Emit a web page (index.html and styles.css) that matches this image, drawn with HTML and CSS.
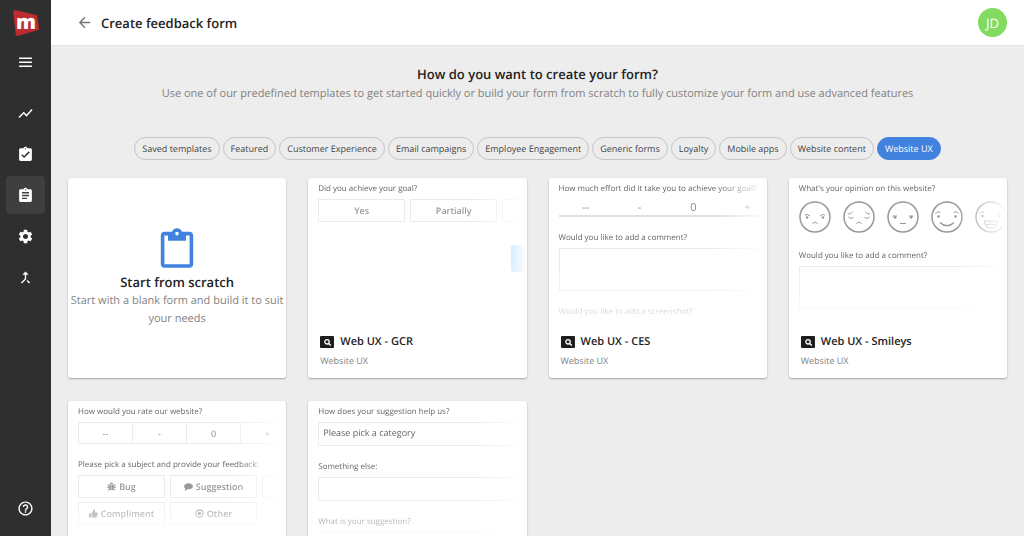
FILE: index.html
```html
<!DOCTYPE html>
<html lang="en">
<head>
  <meta charset="utf-8" />
  <title>Create feedback form</title>
  <meta name="viewport" content="width=device-width, initial-scale=1" />
  <link rel="stylesheet" href="styles.css">
</head>
<body>
  <!-- Shared icons -->
  <svg class="sprite" aria-hidden="true">
    <symbol id="i-template" viewBox="0 0 14 12">
      <rect width="14" height="12" rx="1" fill="#1d1d1d"/>
      <circle cx="7" cy="5.8" r="2.2" fill="none" stroke="#fff" stroke-width="1.3"/>
      <path d="M8.6 7.4l2.2 2.2" stroke="#fff" stroke-width="1.4"/>
    </symbol>
  </svg>

  <!-- Sidebar -->
  <aside class="sidebar">
    <a class="logo" href="#" aria-label="Home">
      <svg viewBox="0 0 26 26"><path d="M2 0L23 5q1 0 1.200 1.200L26 18.500q.2 1.200-1 1.600L4.500 25.900Q3 26 2.700 24.500L.3 1.700Q.3 0 2 0z" fill="#bd2d2f"/><text x="13" y="19" text-anchor="middle">m</text></svg>
    </a>
    <button class="side-item menu" aria-label="Menu">
      <svg viewBox="0 0 24 24"><path d="M3 5h18v2H3zM3 10.700h18v2H3zM3 16.400h18v2H3z"/></svg>
    </button>
    <nav>
      <a class="side-item" href="#" aria-label="Analytics"><svg viewBox="0 0 24 24"><path d="M3.500 18.490l6-6.010 4 4L22 6.920l-1.410-1.410-7.090 7.970-4-4L2 16.990z"/></svg></a>
      <a class="side-item" href="#" aria-label="Tasks"><svg viewBox="0 0 24 24"><path d="M19 3h-4.180C14.400 1.840 13.300 1 12 1s-2.400.84-2.820 2H5c-1.100 0-2 .9-2 2v14c0 1.100.9 2 2 2h14c1.100 0 2-.9 2-2V5c0-1.100-.9-2-2-2zm-7 0c.55 0 1 .45 1 1s-.45 1-1 1-1-.45-1-1 .45-1 1-1zm-2 14l-4-4 1.410-1.410L10 14.170l6.590-6.590L18 9l-8 8z"/></svg></a>
      <a class="side-item active" href="#" aria-label="Forms"><svg viewBox="0 0 24 24"><path d="M19 3h-4.180C14.400 1.840 13.300 1 12 1s-2.400.84-2.820 2H5c-1.100 0-2 .9-2 2v14c0 1.100.9 2 2 2h14c1.100 0 2-.9 2-2V5c0-1.100-.9-2-2-2zm-7 0c.55 0 1 .45 1 1s-.45 1-1 1-1-.45-1-1 .45-1 1-1zm2 14H7v-2h7v2zm3-4H7v-2h10v2zm0-4H7V7h10v2z"/></svg></a>
      <a class="side-item" href="#" aria-label="Settings"><svg viewBox="0 0 24 24"><path d="M19.140 12.940c.04-.3.06-.61.06-.94 0-.32-.02-.64-.07-.94l2.030-1.580c.18-.14.23-.41.12-.61l-1.920-3.320c-.12-.22-.37-.29-.59-.22l-2.390.96c-.5-.38-1.030-.7-1.620-.94l-.36-2.540c-.04-.24-.24-.41-.48-.41h-3.840c-.24 0-.43.17-.47.41l-.36 2.540c-.59.24-1.130.57-1.620.94l-2.390-.96c-.22-.08-.47 0-.59.22L2.740 8.870c-.12.21-.08.47.12.61l2.030 1.580c-.05.3-.09.63-.09.94s.02.64.07.94l-2.030 1.580c-.18.14-.23.41-.12.61l1.920 3.320c.12.22.37.29.59.22l2.390-.96c.5.38 1.030.7 1.620.94l.36 2.540c.05.24.24.41.48.41h3.840c.24 0 .44-.17.47-.41l.36-2.540c.59-.24 1.130-.56 1.620-.94l2.390.96c.22.08.47 0 .59-.22l1.920-3.320c.12-.22.07-.47-.12-.61l-2.010-1.580zM12 15.600c-1.980 0-3.600-1.620-3.600-3.600s1.620-3.600 3.600-3.600 3.600 1.620 3.600 3.600-1.620 3.600-3.600 3.600z"/></svg></a>
      <a class="side-item" href="#" aria-label="Integrations"><svg viewBox="0 0 24 24"><path d="M17 20.410L18.410 19 15 15.590 13.590 17 17 20.410zM7.500 8H11v5.590L5.590 19 7 20.410l6-6V8h3.500L12 3.500 7.500 8z"/></svg></a>
    </nav>
    <a class="side-item help" href="#" aria-label="Help"><svg viewBox="0 0 24 24"><path d="M11 18h2v-2h-2v2zm1-16C6.480 2 2 6.480 2 12s4.480 10 10 10 10-4.480 10-10S17.520 2 12 2zm0 18c-4.410 0-8-3.590-8-8s3.590-8 8-8 8 3.590 8 8-3.590 8-8 8zm0-14c-2.210 0-4 1.790-4 4h2c0-1.100.9-2 2-2s2 .9 2 2c0 2-3 1.750-3 5h2c0-2.250 3-2.500 3-5 0-2.210-1.790-4-4-4z"/></svg></a>
  </aside>

  <div class="page">
    <header class="topbar">
      <a class="back" href="#" aria-label="Back"><svg viewBox="0 0 24 24"><path d="M20 11H7.830l5.590-5.590L12 4l-8 8 8 8 1.410-1.410L7.830 13H20v-2z"/></svg></a>
      <h1>Create feedback form</h1>
      <button class="avatar">JD</button>
    </header>

    <main>
      <section class="intro">
        <h2>How do you want to create your form?</h2>
        <p>Use one of our predefined templates to get started quickly or build your form from scratch to fully customize your form and use advanced features</p>
      </section>

      <div class="filters">
        <button class="chip">Saved templates</button>
        <button class="chip">Featured</button>
        <button class="chip">Customer Experience</button>
        <button class="chip">Email campaigns</button>
        <button class="chip">Employee Engagement</button>
        <button class="chip">Generic forms</button>
        <button class="chip">Loyalty</button>
        <button class="chip">Mobile apps</button>
        <button class="chip">Website content</button>
        <button class="chip selected">Website UX</button>
      </div>

      <section class="cards">
        <a class="card scratch" href="#">
          <svg viewBox="2 0 20 22"><path d="M19 2h-4.180C14.400.84 13.300 0 12 0S9.600.84 9.180 2H5c-1.100 0-2 .9-2 2v16c0 1.100.9 2 2 2h14c1.100 0 2-.9 2-2V4c0-1.100-.9-2-2-2zm-7 0c.55 0 1 .45 1 1s-.45 1-1 1-1-.45-1-1 .45-1 1-1zm7 18H5V4h2v3h10V4h2v16z"/></svg>
          <h3>Start from scratch</h3>
          <p>Start with a blank form and build it to suit your needs</p>
        </a>

        <!-- GCR -->
        <article class="card">
          <div class="preview">
            <div class="field">
              <p class="question">Did you achieve your goal?</p>
              <div class="options">
                <button>Yes</button>
                <button>Partially</button>
                <button aria-label="No"></button>
              </div>
            </div>
            <button class="next" aria-label="Next"></button>
          </div>
          <footer>
            <h3><svg><use href="#i-template"/></svg>Web UX - GCR</h3>
            <p>Website UX</p>
          </footer>
        </article>

        <!-- CES -->
        <article class="card">
          <div class="preview">
            <div class="field">
              <p class="question">How much effort did it take you to achieve your goal?</p>
              <div class="scale line">
                <button>--</button>
                <button>-</button>
                <button>0</button>
                <button>+</button>
              </div>
            </div>
            <div class="field">
              <label class="question" for="ces-comment">Would you like to add a comment?</label>
              <textarea id="ces-comment"></textarea>
            </div>
            <p class="question">Would you like to add a screenshot?</p>
          </div>
          <footer>
            <h3><svg><use href="#i-template"/></svg>Web UX - CES</h3>
            <p>Website UX</p>
          </footer>
        </article>

        <!-- Smileys -->
        <article class="card">
          <div class="preview">
            <div class="field">
              <p class="question">What's your opinion on this website?</p>
              <div class="smileys">
                <button aria-label="Very bad"><svg viewBox="0 0 32 32"><circle cx="16" cy="16" r="15"/><path class="thin" d="M6 14q2-1.500 5 1M26 14q-2-1.500-5 1M13.500 22.500q2.500-3 5 0"/><circle class="dot" cx="8" cy="16.500" r="1.300"/><circle class="dot" cx="24" cy="16.500" r="1.300"/></svg></button>
                <button aria-label="Bad"><svg viewBox="0 0 32 32"><circle cx="16" cy="16" r="15"/><path class="thin" d="M5 13q3 0 4.500-2M27 13q-3 0-4.500-2M5.500 16q2 2.500 5 .5M26.500 16q-2 2.500-5 .5M13.500 22.500q2.500-3 5 0"/></svg></button>
                <button aria-label="Neutral"><svg viewBox="0 0 32 32"><circle cx="16" cy="16" r="15"/><path class="thin" d="M5.500 15H10M22 15h4.500M13 22.500h6"/><circle class="dot" cx="8" cy="16.300" r="1.400"/><circle class="dot" cx="24.200" cy="16.300" r="1.400"/></svg></button>
                <button aria-label="Good"><svg viewBox="0 0 32 32"><circle cx="16" cy="16" r="15"/><path class="thin" d="M4.500 12.500q2-3 4.800-1M27.500 12.500q-2-3-4.800-1"/><path d="M9 21.500q7 6.500 14 0"/><circle class="dot" cx="7.500" cy="15.500" r="1.300"/><circle class="dot" cx="24.500" cy="15.500" r="1.300"/></svg></button>
                <button aria-label="Very good"><svg viewBox="0 0 32 32"><circle cx="16" cy="16" r="15"/><path class="thin" d="M4.500 12.500q2-3 4.800-1M27.500 12.500q-2-3-4.800-1M9.500 20h13q-.5 7-6.500 7t-6.500-7zM11 24q5-2 10 0"/><circle class="dot" cx="7.500" cy="15" r="1.300"/><circle class="dot" cx="24.500" cy="15" r="1.300"/></svg></button>
              </div>
            </div>
            <div class="field">
              <label class="question" for="smiley-comment">Would you like to add a comment?</label>
              <textarea id="smiley-comment"></textarea>
            </div>
          </div>
          <footer>
            <h3><svg><use href="#i-template"/></svg>Web UX - Smileys</h3>
            <p>Website UX</p>
          </footer>
        </article>

        <!-- Rating + subject -->
        <article class="card">
          <div class="preview">
            <div class="field">
              <p class="question">How would you rate our website?</p>
              <div class="scale boxed">
                <button>--</button>
                <button>-</button>
                <button>0</button>
                <button>+</button>
              </div>
            </div>
            <div class="field">
              <p class="question">Please pick a subject and provide your feedback:</p>
              <div class="options">
                <button><svg viewBox="0 0 16 16"><path d="M5 4a3 3 0 0 1 6 0zM4 5h3.600v10Q4 14.500 4 10zM8.400 5H12v5q0 4.500-3.600 5z"/><path class="legs" d="M4 7L1.500 4.500M12 7l2.500-2.500M4 9.500H.5M12 9.500h3.500M4.500 12L2 14.500M11.500 12l2.500 2.500"/></svg>Bug</button>
                <button><svg viewBox="0 0 16 16"><path d="M8 2c4.400 0 8 2.500 8 5.500S12.400 13 8 13q-1 0-2-.2Q4 15 .8 15q1.700-1.500 1.600-3.500Q0 9.800 0 7.500C0 4.500 3.600 2 8 2z"/></svg>Suggestion</button>
                <button aria-label="Question"></button>
                <button><svg viewBox="0 0 16 16"><path d="M0 7.500h3.500V15H0zM4.500 7.500Q8 5 8.200 1.500q.2-1.300 1.500-.8Q12 2 10.300 6H14q2 .2 1.700 2-.1 1-.7 1.300.5 1.500-.6 2.300.2 1.500-.8 2 0 1.700-1.800 1.800H9.500Q7 15.400 4.500 14z"/></svg>Compliment</button>
                <button><svg viewBox="0 0 16 16"><circle class="ring" cx="8" cy="8" r="6.500"/><circle cx="8" cy="8" r="3"/></svg>Other</button>
              </div>
            </div>
          </div>
        </article>

        <!-- Suggestion -->
        <article class="card">
          <div class="preview">
            <div class="field">
              <label class="question" for="category">How does your suggestion help us?</label>
              <select id="category"><option>Please pick a category</option></select>
            </div>
            <div class="field">
              <label class="question" for="other">Something else:</label>
              <input id="other" type="text" />
            </div>
            <div class="field">
              <label class="question" for="suggestion">What is your suggestion?</label>
              <textarea id="suggestion"></textarea>
            </div>
          </div>
        </article>
      </section>
    </main>
  </div>
</body>
</html>
```
FILE: styles.css
```css
:root {
  --dark:#2f2f2f;
  --bg:#ededed;
  --text:#222;
  --muted:#828282;
  --line:#ebebeb;
  --blue:#4182df;
}

*{box-sizing:border-box;margin:0;padding:0}
body{
  font-family:'Open Sans','Noto Sans',sans-serif;
  text-rendering:geometricPrecision;
  background:var(--bg);color:var(--text);
  height:100vh;display:flex;overflow:hidden;
}
button,input,select,textarea{font:inherit;color:inherit;background:none;border:none;text-rendering:inherit}
button{cursor:pointer}
a{color:inherit;text-decoration:none}
.sprite{display:none}

/* Sidebar */
.sidebar{
  flex:none;width:51px;padding:10px 6px 9px;
  display:flex;flex-direction:column;align-items:center;
  background:var(--dark);
}
.logo svg{display:block;width:26px;height:26px;overflow:visible}
.logo text{font-size:20px;font-weight:800;fill:#fff}
.side-item{
  display:flex;align-items:center;justify-content:center;
  width:39px;height:38px;border-radius:4px;
}
.side-item svg{width:17px;height:17px;fill:#fff}
.side-item.active{background:#3f3f3f}
.menu{margin-top:7px}
.sidebar nav{display:flex;flex-direction:column;gap:3px;margin-top:13px}
.help{margin-top:auto}

.page{flex:1;min-width:0;display:flex;flex-direction:column}

/* Top bar */
.topbar{
  flex:none;display:flex;align-items:center;gap:8px;
  height:46px;padding:0 17px 0 25px;
  background:#fff;border-bottom:1px solid #e4e4e4;
}
.back svg{display:block;width:17px;height:17px;fill:#777}
.topbar h1,.intro h2,.scratch h3{font-size:13px;font-weight:600}
.avatar{
  width:29px;height:29px;margin-left:auto;border-radius:50%;
  background:#82db5f;color:#fff;font-size:13px;
}

main{flex:1;min-height:0;overflow-y:auto;scrollbar-width:none;padding:18px 17px 24px}

.intro{text-align:center;line-height:20px}
.intro p{font-size:11px;color:var(--muted)}

.filters{display:flex;flex-wrap:wrap;justify-content:center;gap:3px;margin-top:33px}
.chip{
  height:23px;padding:0 7px;border:1px solid #c4c4c4;border-radius:12px;
  font-size:9px;color:#444;
}
.chip.selected{background:var(--blue);border-color:var(--blue);color:#fff}

/* Cards */
.cards{
  display:grid;grid-template-columns:repeat(auto-fill,minmax(200px,1fr));
  gap:23px 22px;margin-top:18px;
}
.card{
  display:flex;flex-direction:column;min-width:0;height:200px;
  background:#fff;border-radius:3px;overflow:hidden;
  box-shadow:0 1px 2px rgba(0,0,0,.3);
}
.scratch{align-items:center;justify-content:center;text-align:center;padding:0 1px}
.scratch svg{width:36px;height:40px;fill:var(--blue)}
.scratch h3{line-height:20px;margin-top:4px}
.scratch p{font-size:11px;line-height:18px;color:var(--muted)}

.card footer{padding:5px 12px 0}
.card footer h3{display:flex;align-items:center;gap:6px;font-size:11px;font-weight:600;line-height:18px}
.card footer h3 svg{width:14px;height:12px}
.card footer p{font-size:9px;line-height:20px;color:var(--muted)}

/* Form preview, fades out to the right and the bottom */
.preview{
  position:relative;height:150px;padding:3px 0 0 10px;overflow:hidden;
  font-size:9px;color:#666;
  mask-image:linear-gradient(to right,#000 76%,transparent),linear-gradient(#000 60%,transparent 98%);
  mask-composite:intersect;
}
.question{display:block;font-size:8px;line-height:16px;margin-bottom:2px;white-space:nowrap}
.field{margin-bottom:13px}
.preview input,.preview select,.preview textarea{
  display:block;width:100%;height:24px;padding:0 4px 3px;
  border:1px solid var(--line);border-right:none;
}
.preview select{appearance:none}
.preview textarea{height:43px;resize:none}

.options{display:grid;grid-template-columns:repeat(3,87px);gap:4px 5px}
.options button{
  display:flex;align-items:center;justify-content:center;gap:3px;
  height:23px;border:1px solid var(--line);color:#999;font-weight:600;
}
.options svg{width:9px;height:9px;fill:#999}
.options .legs,.options .ring{fill:none;stroke:#999;stroke-width:2}

.scale{display:grid;grid-template-columns:repeat(4,54px)}
.scale button{height:18px;color:#888}
.scale.line button{border-bottom:2px solid #e0e0e0;font-size:11px}
.scale.boxed button{height:22px;border:1px solid var(--line);border-right:none}

.smileys{display:flex;gap:12px;height:36px;align-items:center}
.smileys svg{display:block;width:32px;height:32px;fill:none;stroke:#999;stroke-width:1.500}
.smileys .thin{stroke-width:1}
.smileys .dot{fill:#999;stroke:none}

/* side button that hangs over the edge of the form */
.next{
  position:absolute;top:67px;right:3px;width:13px;height:27px;
  border-radius:3px 0 0 3px;background:#80c5f6;
}
```
